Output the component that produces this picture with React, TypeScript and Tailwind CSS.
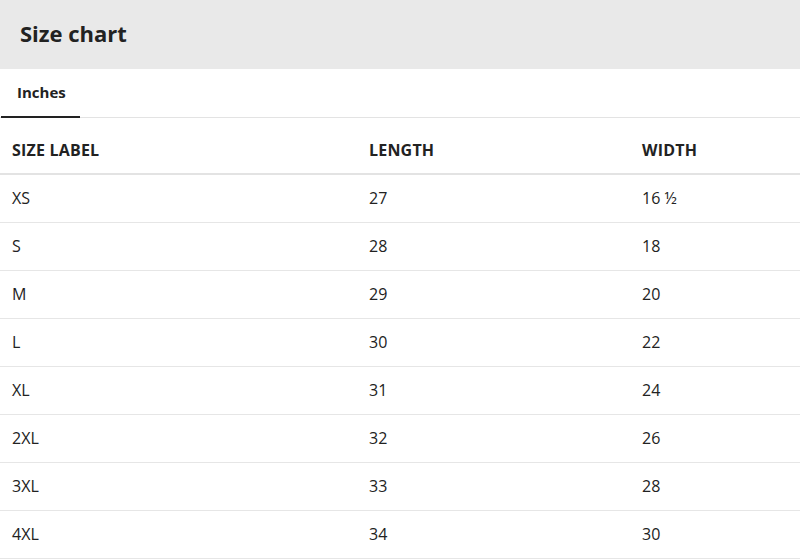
const rows = [
  ["XS", "27", "16 ½"],
  ["S", "28", "18"],
  ["M", "29", "20"],
  ["L", "30", "22"],
  ["XL", "31", "24"],
  ["2XL", "32", "26"],
  ["3XL", "33", "28"],
  ["4XL", "34", "30"],
]

export default function App() {
  return (
    <div className="w-[800px] h-[560px] overflow-hidden bg-white text-[#222] font-['Open_Sans','Lato',sans-serif]">
      <div className="h-[69px] bg-[#e9e9e9] flex items-center px-5">
        <h1 className="text-[22px] font-bold text-[#222] mt-[-2px]">Size chart</h1>
      </div>

      <div className="h-[49px] flex border-b border-[#e3e3e3]">
        <div className="ml-[1px] w-[79px] flex items-center pl-4 border-b-[2px] border-[#222] mb-[-1px]">
          <span className="text-[15px] font-bold">Inches</span>
        </div>
      </div>

      <table className="w-full text-[16px] border-collapse">
        <thead>
          <tr className="h-[56px] border-b-[2px] border-[#e3e3e3]">
            <th className="w-[357px] text-left font-bold uppercase tracking-[0.2px] pl-3 pt-2">Size label</th>
            <th className="w-[273px] text-left font-bold uppercase tracking-[0.2px] pl-3 pt-2">Length</th>
            <th className="text-left font-bold uppercase tracking-[0.2px] pl-3 pt-2">Width</th>
          </tr>
        </thead>
        <tbody>
          {rows.map((r) => (
            <tr key={r[0]} className="h-[48px] border-b border-[#e6e6e6]">
              <td className="pl-3">{r[0]}</td>
              <td className="pl-3">{r[1]}</td>
              <td className="pl-3">{r[2]}</td>
            </tr>
          ))}
        </tbody>
      </table>
    </div>
  )
}
